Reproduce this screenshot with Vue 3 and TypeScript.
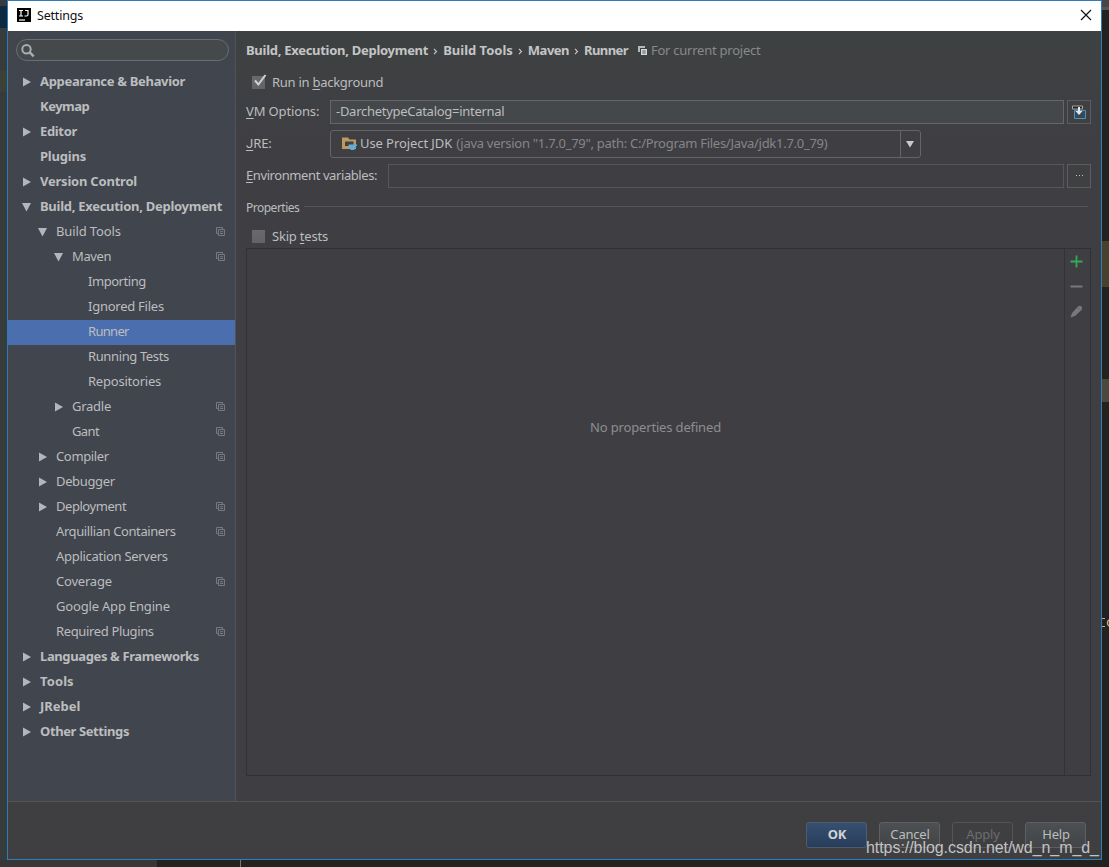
<script setup lang="ts">
interface TreeItem {
  label: string
  level: number
  /** letter spacing in px */
  track: number
  arrow?: 'open' | 'closed'
  project?: boolean
  selected?: boolean
}

const tree: TreeItem[] = [
  { label: 'Appearance & Behavior', level: 0, track: -0.31, arrow: 'closed' },
  { label: 'Keymap', level: 0, track: -0.5 },
  { label: 'Editor', level: 0, track: -0.35, arrow: 'closed' },
  { label: 'Plugins', level: 0, track: -0.2 },
  { label: 'Version Control', level: 0, track: -0.22, arrow: 'closed' },
  { label: 'Build, Execution, Deployment', level: 0, track: -0.28, arrow: 'open' },
  { label: 'Build Tools', level: 1, track: -0.12, arrow: 'open', project: true },
  { label: 'Maven', level: 2, track: -0.4, arrow: 'open', project: true },
  { label: 'Importing', level: 3, track: -0.45 },
  { label: 'Ignored Files', level: 3, track: -0.25 },
  { label: 'Runner', level: 3, track: -0.7, selected: true },
  { label: 'Running Tests', level: 3, track: -0.38 },
  { label: 'Repositories', level: 3, track: -0.22 },
  { label: 'Gradle', level: 2, track: -0.25, arrow: 'closed', project: true },
  { label: 'Gant', level: 2, track: -0.6, project: true },
  { label: 'Compiler', level: 1, track: -0.35, arrow: 'closed', project: true },
  { label: 'Debugger', level: 1, track: -0.35, arrow: 'closed' },
  { label: 'Deployment', level: 1, track: -0.45, arrow: 'closed', project: true },
  { label: 'Arquillian Containers', level: 1, track: -0.4, project: true },
  { label: 'Application Servers', level: 1, track: -0.29 },
  { label: 'Coverage', level: 1, track: -0.2, project: true },
  { label: 'Google App Engine', level: 1, track: -0.18 },
  { label: 'Required Plugins', level: 1, track: -0.36, project: true },
  { label: 'Languages & Frameworks', level: 0, track: -0.38, arrow: 'closed' },
  { label: 'Tools', level: 0, track: 0.1, arrow: 'closed' },
  { label: 'JRebel', level: 0, track: 0, arrow: 'closed' },
  { label: 'Other Settings', level: 0, track: -0.4, arrow: 'closed' },
]
const crumbs = ['Build, Execution, Deployment', 'Build Tools', 'Maven', 'Runner']
</script>

<template>
  <div class="desktop">
    <i class="patch blue"></i><i class="patch olive"></i>
    <i class="patch tab"></i><i class="patch band"></i><i class="patch band2"></i>
    <i class="patch status"></i><i class="patch caret"></i>
    <svg class="code" width="8" height="11" viewBox="0 0 8 11">
      <path d="M0 1.500h3M0 9.500h3" stroke="#b9b7ac" />
      <path d="M8 3Q5.500 3 5.500 6T8 9" fill="none" stroke="#c6b16b" stroke-width="1.500" />
    </svg>
    <section class="window">
      <header class="title">
        <svg class="logo" width="14" height="14" viewBox="0 0 14 14">
          <rect width="14" height="14" fill="#000" />
          <path d="M2 2.500h4M4 2.500v5.500M2 8h4M8 2.500h3v4q0 1.500-1.500 1.500H7.500" fill="none" stroke="#fff" stroke-width="1.200" />
          <path d="M2 12h6" stroke="#fff" stroke-width="1.200" />
        </svg>
        <span>Settings</span>
        <svg class="close" width="12" height="12" viewBox="0 0 12 12">
          <path d="M1 1l10 10M11 1L1 11" stroke="#111" stroke-width="1.150" />
        </svg>
      </header>

      <div class="body">
        <aside class="sidebar">
          <div class="search">
            <svg width="14" height="14" viewBox="0 0 14 14">
              <circle cx="5.500" cy="5.200" r="4.200" fill="none" stroke="#a9adb2" stroke-width="2" />
              <path d="M8.500 8.200l4.200 4.200" stroke="#a9adb2" stroke-width="2.400" />
            </svg>
          </div>
          <ul class="tree">
            <li v-for="item in tree" :key="item.label" :class="['l' + item.level, { selected: item.selected }]">
              <span class="arrow">
                <svg v-if="item.arrow" width="10" height="10" viewBox="0 0 10 10">
                  <path :d="item.arrow === 'open' ? 'M0 1h9L4.500 9.500z' : 'M1 .5v9L9 5z'" fill="#b2b6bd" />
                </svg>
              </span>
              <span class="label" :style="{ letterSpacing: item.track + 'px' }">{{ item.label }}</span>
              <svg v-if="item.project" class="proj" width="10" height="10" viewBox="0 0 10 10">
                <path d="M2 6.500H.5v-6h6V2M2.500 2.500h6v6h-6zM4 4.700h3.200M4 6.500h3.200" fill="none" stroke="#757980" />
              </svg>
            </li>
          </ul>
        </aside>

        <main class="panel">
          <div class="crumbs">
            <template v-for="(c, i) in crumbs" :key="c">
              <b>{{ c }}</b>
              <svg v-if="i < crumbs.length - 1" class="sep" width="5" height="7" viewBox="0 0 5 7">
                <path d="M1 .8l2.500 2.700L1 6.200" fill="none" stroke="#c4c4c4" stroke-width="1.200" />
              </svg>
            </template>
            <svg class="scope" width="9" height="9" viewBox="0 0 9 9">
              <path d="M0 0h7v2H2v4H0z" fill="#b5b9bb" />
              <path d="M3 3h6v6H3z" fill="#d5d9da" />
              <path d="M4.300 5h3.400M4.300 7h3.400" stroke="#53585b" />
            </svg>
            <span class="dim">For current project</span>
          </div>

          <label class="check first">
            <span class="box">
              <svg width="16" height="15" viewBox="0 0 16 15"><path d="M3 7.500l3.400 4L13.500 2" fill="none" stroke="#d0d2d3" stroke-width="2" /></svg>
            </span>
            <span>Run in <u>b</u>ackground</span>
          </label>

          <div class="row vm">
            <span class="name"><u>V</u>M Options:</span>
            <div class="field lit"><span>-DarchetypeCatalog=internal</span></div>
            <button class="mini">
              <svg width="15" height="15" viewBox="0 0 15 15">
                <path d="M2.500 5.500h11v8h-11z" fill="#34495a" stroke="#4d94bf" />
                <path d="M.5 1h10v3H.5z" fill="#241f20" stroke="#a7a7a7" />
                <path d="M6 2h2v4h2.500L7 10 3.500 6H6z" fill="#e5e7e8" />
              </svg>
            </button>
          </div>

          <div class="row jre">
            <span class="name"><u>J</u>RE:</span>
            <div class="combo">
              <svg class="folder" width="16" height="14" viewBox="0 0 16 14">
                <path d="M0 .5h6l1.500 2H14v9.500H0z" fill="#b99b60" />
                <path d="M3 4.500h8.500V9H3z" fill="#414044" />
                <path d="M6.500 7.500h8.500v1.500h-1V11l-2 2H9l-2-2z" fill="#62add5" />
              </svg>
              <span class="jdk">Use Project JDK</span>
              <span class="path">(java version "1.7.0_79", path: C:/Program Files/Java/jdk1.7.0_79)</span>
              <span class="drop"><svg width="8" height="7" viewBox="0 0 8 7"><path d="M0 0h8L4 6.500z" fill="#c9cacc" /></svg></span>
            </div>
          </div>

          <div class="row env">
            <span class="name"><u>E</u>nvironment variables:</span>
            <div class="field"></div>
            <button class="mini"><svg width="9" height="2" viewBox="0 0 9 2"><path d="M1 .5h1M4 .5h1M7 .5h1" stroke="#c8c8c8" /></svg></button>
          </div>

          <div class="group"><span>Properties</span><i></i></div>

          <label class="check skip">
            <span class="box"></span>
            <span>Skip <u>t</u>ests</span>
          </label>

          <div class="table">
            <div class="empty">No properties defined</div>
            <div class="tools">
              <svg width="13" height="13" viewBox="0 0 13 13"><path d="M6.500 .5v12M.5 6.500h12" stroke="#35a953" stroke-width="1.800" /></svg>
              <svg width="13" height="13" viewBox="0 0 13 13"><path d="M.5 6.500h12" stroke="#77787a" stroke-width="2" /></svg>
              <svg width="13" height="13" viewBox="0 0 13 13"><path d="M.5 12.500L2 8l6-6.500q2-1.500 3.500 0t0 3.500L5 11z" fill="#77797a" /><path d="M8 2.500L11 5.500" stroke="#66686a" /></svg>
            </div>
          </div>
        </main>
      </div>

      <footer class="footer">
        <button class="btn ok">OK</button>
        <button class="btn">Cancel</button>
        <button class="btn off">Apply</button>
        <button class="btn">Help</button>
      </footer>
    </section>
    <div class="url">https://blog.csdn.net/wd_n_m_d_</div>
  </div>
</template>

<style>
body { margin: 0; overflow: hidden; }
</style>

<style scoped>
* { box-sizing: border-box; }
.desktop {
  position: relative; width: 1109px; height: 867px; overflow: hidden;
  background: linear-gradient(90deg, #363b3c 0 7px, #20231f 7px);
  font-family: "Noto Sans", "Open Sans", sans-serif; font-size: 13px; color: #bbbdbe;
  padding-left: 7px;
}
svg { display: block; flex: none; }
u { text-decoration-thickness: 1px; text-underline-offset: 2px; text-decoration-skip-ink: none; }
.patch { position: absolute; }
.patch.blue { left: 0; top: 6px; width: 7px; height: 22px; background: #0d2940; }
.patch.olive { left: 0; top: 70px; width: 7px; height: 22px; background: #3d4037; }
.patch.tab { right: 0; top: 0; width: 7px; height: 10px; background: #45474a; border-bottom: 3px solid #55575a; }
.patch.band { right: 0; top: 241px; width: 7px; height: 46px; background: #45432f; }
.patch.band2 { right: 0; top: 379px; width: 7px; height: 23px; background: #4b493e; }
.patch.status { left: 0; bottom: 0; width: 157px; height: 7px; background: #363739; }
.patch.caret { left: 157px; bottom: 0; width: 84px; height: 7px; border-right: 1px solid #777; }
.code { position: absolute; left: 1102px; top: 617px; }

.window {
  position: relative; width: 1095px; height: 860px; border: 1px solid #2f7cb9;
  background: #3f3f42; display: flex; flex-direction: column;
}
.title { height: 30px; background: #fff; color: #111; display: flex; align-items: center; padding: 0 9px 2px; gap: 6px; font-size: 12.5px; flex: none; letter-spacing: -0.2px; }
.title .close { margin-left: auto; }
.body { height: 771px; display: flex; border-bottom: 1px solid #535456; flex: none; }

.sidebar { width: 228px; background: #41454e; border-right: 1px solid #505357; padding-top: 8px; flex: none; }
.search { width: 213px; height: 22px; margin-left: 8px; border: 1px solid #696d71; border-radius: 11px; background: #46494b; padding: 4px 4px; }
.tree { list-style: none; margin: 9px 0 0; padding: 0; width: 227px; }
.tree li { height: 25px; display: flex; align-items: center; padding: 0 9px 2px 14px; }
.tree li.l0 { font-weight: 700; }
.tree li.l1 { padding-left: 30px; }
.tree li.l2 { padding-left: 46px; }
.tree li.l3 { padding-left: 62px; }
.tree .arrow { width: 18px; flex: none; }
.tree .label { white-space: nowrap; position: relative; top: -1px; }
.tree .proj { margin-left: auto; }
.tree .selected { background: #4b6eaf; }

.panel { flex: 1; padding: 9px 10px 0; display: flex; flex-direction: column; background: linear-gradient(#3e4142, #3f3f43 110px); }
.crumbs { height: 20px; display: flex; align-items: center; white-space: nowrap; color: #c4c5c6; letter-spacing: -0.28px; }
.crumbs b:nth-of-type(2) { letter-spacing: 0; }
.crumbs b:nth-of-type(3) { letter-spacing: -0.5px; }
.crumbs b:nth-of-type(4) { letter-spacing: -0.6px; }
.crumbs .sep { margin: 3px 5px 0; }
.crumbs .scope { margin: 0 4px 0 10px; }
.dim { color: #888a8b; letter-spacing: -0.24px; }
.check { display: flex; align-items: center; height: 18px; padding-left: 6px; gap: 7px; letter-spacing: -0.2px; }
.check.first { margin-top: 12px; height: 20px; letter-spacing: -0.27px; }
.check .box { width: 13px; height: 13px; background: linear-gradient(#696a6c, #626366); flex: none; }
.check .box svg { margin-top: -3px; }
.row { display: flex; align-items: center; }
.name { flex: none; white-space: nowrap; padding-bottom: 2px; letter-spacing: -0.14px; }
.vm { height: 24px; margin-top: 8px; }
.vm .name, .jre .name { width: 84px; }
.jre .name u { font-family: Roboto, sans-serif; letter-spacing: 0; }
.env .name { width: 142px; letter-spacing: -0.41px; }
.field { flex: 1; height: 24px; border: 1px solid #56575a; padding-left: 5px; line-height: 21px; letter-spacing: -0.28px; }
.lit { background: #45484a; border-color: #646668; }
.mini { width: 24px; height: 24px; margin-left: 3px; border: 1px solid #5b5d5f; background: #3f4042; padding: 0; display: flex; align-items: center; justify-content: center; }
.jre { margin-top: 6px; height: 28px; }
.combo { width: 591px; height: 28px; border: 1px solid #646567; border-radius: 3px; display: flex; align-items: center; padding-left: 11px; white-space: nowrap; }
.jdk { margin-left: 2px; padding-bottom: 2px; letter-spacing: -0.08px; }
.path { color: #858688; margin-left: 4px; padding-bottom: 2px; letter-spacing: -0.28px; }
.drop { margin-left: auto; width: 20px; height: 26px; border-left: 1px solid #646567; display: flex; align-items: center; justify-content: center; padding-right: 2px; }
.env { margin-top: 6px; height: 24px; }
.group { height: 18px; margin-top: 10px; display: flex; align-items: center; font-size: 12px; letter-spacing: -0.5px; }
.group i { flex: 1; height: 1px; background: #555658; margin: -2px 3px 0 5px; }
.skip { margin-top: 11px; }
.table { margin-top: 3px; height: 528px; border: 1px solid #303134; display: flex; flex: none; }
.empty { flex: 1; height: 356px; display: flex; align-items: center; justify-content: center; color: #8d8e90; letter-spacing: -0.16px; }
.tools { width: 26px; border-left: 1px solid #323336; display: flex; flex-direction: column; gap: 12px; padding: 6px 0 0 5px; }

.footer { flex: 1; display: flex; justify-content: flex-end; gap: 12px; padding: 20px 15px 0 0; }
.btn { height: 26px; width: 61px; border: 1px solid #5e6062; border-radius: 3px; background: linear-gradient(#4d5052, #424446); color: #bbbdbe; font: inherit; padding: 0 0 2px 1px; letter-spacing: -0.2px; }
.btn.ok { font-weight: 700; background: linear-gradient(#365071, #293d5b); border-color: #4c5d70; color: #d0d3d6; }
.btn.off { background: transparent; color: #6b6d6f; border-color: #545557; }
.url { position: absolute; left: 866px; top: 838px; font: 16px/20px "Liberation Sans", Arial, sans-serif; letter-spacing: -0.06px; color: #c2c3c4; white-space: nowrap; }
</style>
